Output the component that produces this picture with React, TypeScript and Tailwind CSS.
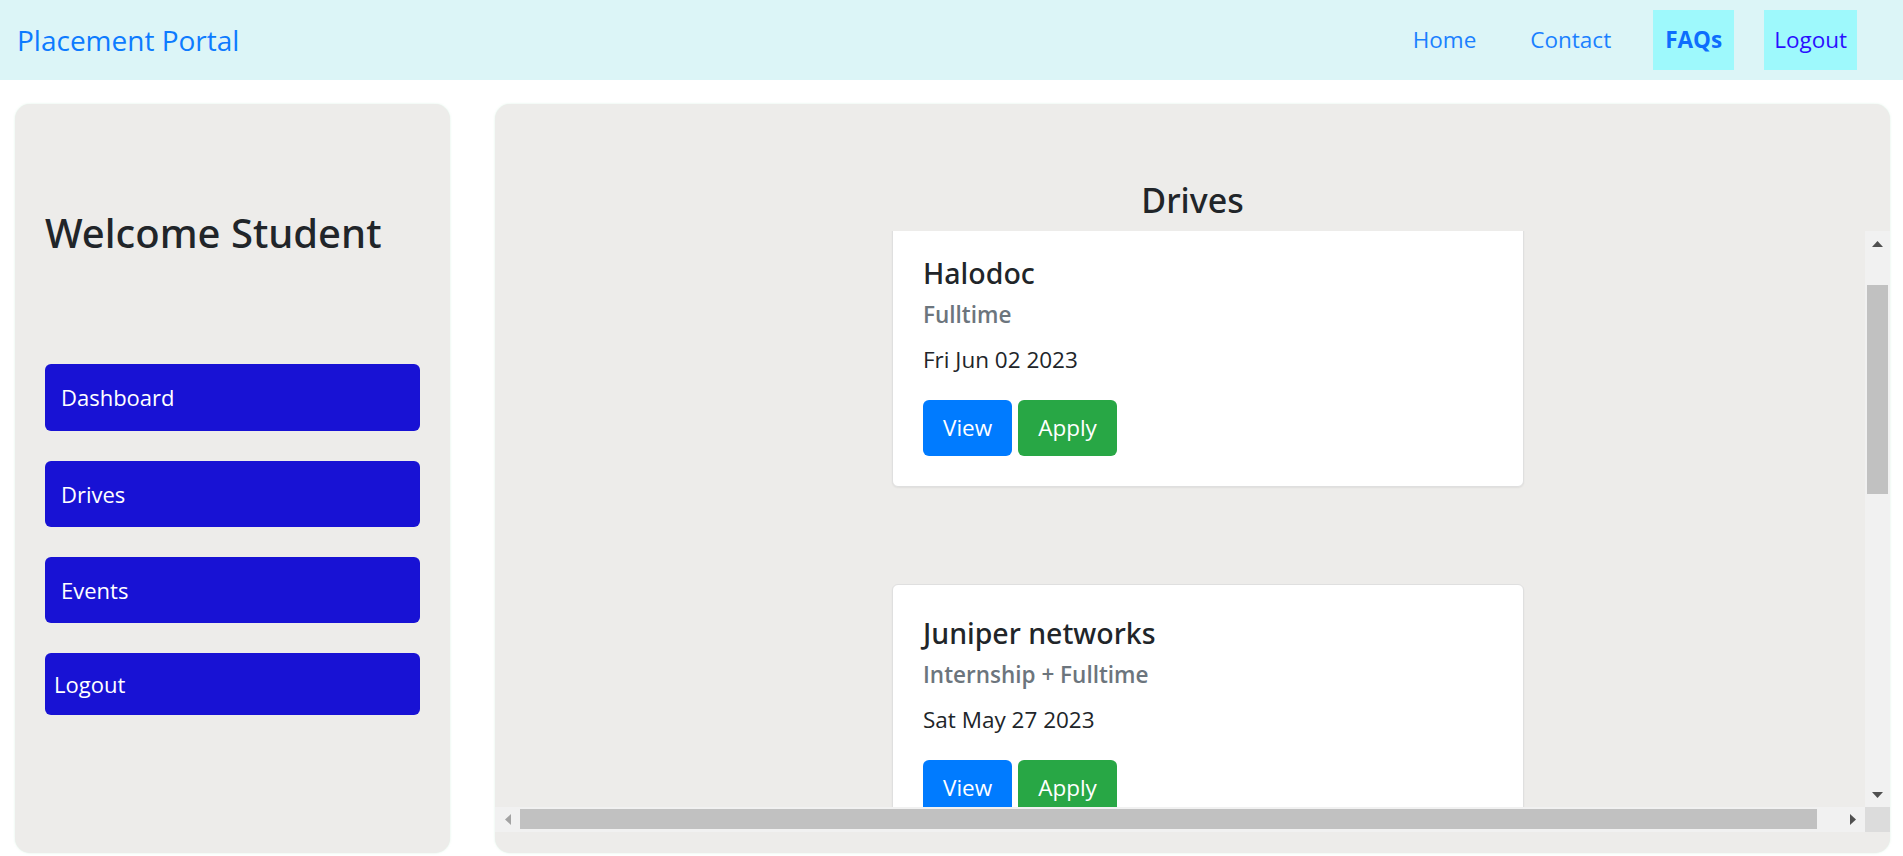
import React from "react";

type Drive = { name: string; type: string; date: string };

const drives: Drive[] = [
  { name: "Halodoc", type: "Fulltime", date: "Fri Jun 02 2023" },
  { name: "Juniper networks", type: "Internship + Fulltime", date: "Sat May 27 2023" },
  { name: "Walmart", type: "Internship", date: "Mon May 22 2023" },
  { name: "Amazon", type: "Fulltime", date: "Thu May 18 2023" },
];

const heading = "font-['Noto_Sans','Open_Sans',sans-serif] font-medium";

function DriveCard({ d }: { d: Drive }) {
  return (
    <div className="ml-[397px] w-[632px] shrink-0 rounded-[6px] border border-[#dfdfdf] bg-white p-[30px] shadow-[0_1px_2px_rgba(0,0,0,0.06)]">
      <div className={"h-[36px] text-[28.5px] leading-[36px] text-[#212529] " + heading}>{d.name}</div>
      <div className="mt-[9px] h-[29px] text-[22.5px] leading-[29px] font-semibold text-[#6c757d]">{d.type}</div>
      <div className="mt-[13px] h-[36px] text-[22.5px] leading-[36px] text-[#212529]">{d.date}</div>
      <div className="mt-[22px] flex gap-[6px]">
        <button className="h-[56px] rounded-[6px] bg-[#007bff] px-[20px] text-[22.5px] leading-[36px] text-white">View</button>
        <button className="h-[56px] rounded-[6px] bg-[#28a745] px-[20px] text-[22.5px] leading-[36px] text-white">Apply</button>
      </div>
    </div>
  );
}

function Arrow({ dir, color }: { dir: "up" | "down" | "left" | "right"; color: string }) {
  const pts =
    dir === "up"
      ? "0,6 5.5,0 11,6"
      : dir === "down"
      ? "0,0 11,0 5.5,6"
      : dir === "left"
      ? "6,0 6,11 0,5.5"
      : "0,0 6,5.5 0,11";
  const w = dir === "up" || dir === "down" ? 11 : 6;
  const h = dir === "up" || dir === "down" ? 6 : 11;
  return (
    <svg width={w} height={h} viewBox={`0 0 ${w} ${h}`}>
      <polygon points={pts} fill={color} />
    </svg>
  );
}

export default function App() {
  const sideBtn = "flex items-center rounded-[6px] bg-[#1812d4] text-[22px] text-white";

  return (
    <div className="min-h-screen w-full bg-white font-['Open_Sans',sans-serif]">
      <nav className="flex h-[80px] items-center bg-[#dcf5f7] pl-[17px] pr-[46px]">
        <div className="text-[28px] leading-[36px] text-[#0d7bff]">Placement Portal</div>
        <div className="ml-auto flex items-center gap-[30px] text-[22.5px] leading-[36px]">
          <a className="px-[12px] py-[12px] text-[#1a80ff]">Home</a>
          <a className="px-[12px] py-[12px] text-[#1a80ff]">Contact</a>
          <a className="bg-[#9ef9fc] px-[12px] py-[12px] font-bold text-[#0d6efd]">FAQs</a>
          <a className="bg-[#9ef9fc] px-[10px] py-[12px] text-[#2a10ff]">Logout</a>
        </div>
      </nav>

      <div className="flex gap-[45px] px-[15px] pt-[24px]">
        <aside className="h-[749px] w-[435px] shrink-0 rounded-[15px] bg-[#edecea] px-[30px] pt-[104px] shadow-[0_0_2px_rgba(180,230,200,0.5)]">
          <h2 className={"h-[50px] text-[40px] leading-[50px] text-[#212529] " + heading}>Welcome Student</h2>
          <div className="mt-[106px] flex flex-col gap-[30px]">
            <div className={sideBtn + " h-[67px] pl-[16px]"}>Dashboard</div>
            <div className={sideBtn + " h-[66px] pl-[16px]"}>Drives</div>
            <div className={sideBtn + " h-[66px] pl-[16px]"}>Events</div>
            <div className={sideBtn + " h-[62px] pl-[9px]"}>Logout</div>
          </div>
        </aside>

        <main className="flex h-[749px] w-[1395px] shrink-0 flex-col rounded-[15px] bg-[#edecea] pt-[74px] shadow-[0_0_2px_rgba(180,230,200,0.5)]">
          <h3 className={"h-[44px] text-center text-[34px] leading-[44px] text-[#212529] " + heading}>Drives</h3>
          <div className="mt-[9px] grid h-[601px] w-full grid-cols-[1370px_25px] grid-rows-[576px_25px]">
            <div className="overflow-hidden">
              <div className="-mt-[7px] flex w-[1391px] flex-col gap-[97px]">
                {drives.map((d) => (
                  <DriveCard key={d.name} d={d} />
                ))}
              </div>
            </div>
            <div className="flex flex-col bg-[#f1f1f1]">
              <div className="flex h-[25px] items-center justify-center">
                <Arrow dir="up" color="#505050" />
              </div>
              <div className="flex-1 px-[2px] pt-[29px]">
                <div className="h-[209px] bg-[#c1c1c1]" />
              </div>
              <div className="flex h-[25px] items-center justify-center">
                <Arrow dir="down" color="#505050" />
              </div>
            </div>
            <div className="flex bg-[#f1f1f1]">
              <div className="flex w-[25px] items-center justify-center">
                <Arrow dir="left" color="#a3a3a3" />
              </div>
              <div className="flex-1 pt-[2px] pb-[3px] pr-[23px]">
                <div className="h-full bg-[#c1c1c1]" />
              </div>
              <div className="flex w-[25px] items-center justify-center">
                <Arrow dir="right" color="#505050" />
              </div>
            </div>
            <div className="bg-[#dcdcdc]" />
          </div>
        </main>
      </div>
    </div>
  );
}
